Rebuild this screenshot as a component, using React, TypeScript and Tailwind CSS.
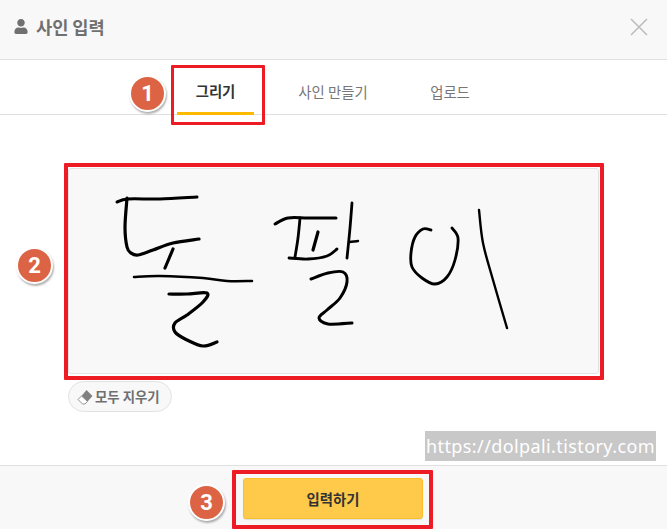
import React from "react";
import { FaUser } from "react-icons/fa";

type P = [number, number];

// Catmull-Rom through the sampled points of the handwriting
function smooth(p: P[]): string {
  let d = `M${p[0][0]} ${p[0][1]}`;
  for (let i = 0; i < p.length - 1; i++) {
    const a = p[Math.max(i - 1, 0)], b = p[i], c = p[i + 1], e = p[Math.min(i + 2, p.length - 1)];
    const c1x = b[0] + (c[0] - a[0]) / 6, c1y = b[1] + (c[1] - a[1]) / 6;
    const c2x = c[0] - (e[0] - b[0]) / 6, c2y = c[1] - (e[1] - b[1]) / 6;
    d += ` C${c1x.toFixed(1)} ${c1y.toFixed(1)} ${c2x.toFixed(1)} ${c2y.toFixed(1)} ${c[0]} ${c[1]}`;
  }
  return d;
}

const strokes: { w: number; p: P[] }[] = [
  { w: 3, p: [[117, 202], [128, 199], [160, 199], [197, 197]] },
  { w: 3.2, p: [[127, 198], [125, 227], [127, 247], [131, 253], [138, 255], [153, 250], [173, 243], [199, 239]] },
  { w: 3.2, p: [[173, 249], [165, 268]] },
  { w: 2.5, p: [[134, 277], [160, 276], [203, 278], [227, 281], [252, 281]] },
  { w: 3.2, p: [[169, 294], [187, 294], [207, 293], [203, 302], [187, 315], [175, 323], [175, 332], [187, 340], [203, 346], [217, 342]] },
  { w: 3, p: [[275, 224], [288, 218], [308, 218], [336, 218]] },
  { w: 2.8, p: [[300, 218], [298, 238], [295, 257]] },
  { w: 3.2, p: [[318, 232], [313, 250]] },
  { w: 2.8, p: [[289, 258], [308, 259], [327, 256], [337, 249]] },
  { w: 2.8, p: [[352, 203], [350, 228], [347, 258]] },
  { w: 2.5, p: [[350, 242], [358, 241]] },
  { w: 3, p: [[311, 279], [328, 273], [343, 272], [347, 282], [340, 298], [327, 310], [319, 318], [328, 324], [352, 323]] },
  { w: 2.8, p: [[431, 230], [423, 229], [415, 237], [411, 253], [412, 267], [422, 278], [435, 284], [447, 277], [455, 260], [458, 238], [452, 228]] },
  { w: 2.4, p: [[479, 210], [483, 243], [493, 280], [507, 328]] },
];

function Badge({ n, className }: { n: number; className: string }) {
  return (
    <div
      className={`absolute flex h-[37px] w-[37px] items-center justify-center rounded-full border-2 border-white bg-[#dc6445] text-[22px] font-bold text-white shadow-[1px_2px_2px_rgba(0,0,0,0.3)] ${className}`}
      style={{ fontFamily: "Roboto, sans-serif" }}
    >
      {n}
    </div>
  );
}

export default function App() {
  return (
    <div
      className="relative flex h-[529px] w-[667px] flex-col overflow-hidden bg-white"
      style={{ fontFamily: '"Noto Sans CJK KR", "Noto Sans", sans-serif' }}
    >
      {/* header */}
      <header className="flex h-[60px] items-center justify-between border-b border-[#e0e0e0] bg-[#f8f8f8] pb-[6px] pl-[14px] pr-[19px]">
        <div className="flex items-center gap-[8px] text-[#707070]">
          <FaUser className="h-[15px] w-[14px]" />
          <span className="text-[17.6px] font-bold leading-none">사인 입력</span>
        </div>
        <svg width="18" height="18" viewBox="0 0 18 18" className="text-[#bdbdbd]">
          <path d="M1 1 L17 17 M17 1 L1 17" stroke="currentColor" strokeWidth="1.6" fill="none" />
        </svg>
      </header>

      {/* tabs */}
      <nav className="flex h-[55px] gap-[24px] border-b border-[#e0e0e0] pl-[177px] text-[14.4px]">
        <div className="mb-[-1px] flex w-[77px] items-center justify-center border-b-[3px] border-[#ffb900] pt-[9px] font-bold text-[#333]">
          그리기
        </div>
        <div className="flex w-[110px] items-center justify-center pt-[10px] text-[#777]">사인 만들기</div>
        <div className="ml-[-2px] flex w-[80px] items-center justify-center pt-[10px] text-[#777]">업로드</div>
      </nav>

      {/* signature area */}
      <main className="flex flex-1 flex-col items-start px-[68px] pt-[53px]">
        <div className="relative h-[206px] w-[531px] rounded-[3px] border border-[#e3e3e3] bg-[#f8f8f8]">
          <svg
            className="absolute inset-0 h-full w-full"
            viewBox="69 169 529 204"
            fill="none"
            stroke="#000"
            strokeLinecap="round"
            strokeLinejoin="round"
          >
            {strokes.map((s, i) => (
              <path key={i} d={smooth(s.p)} strokeWidth={s.w} />
            ))}
          </svg>
        </div>
        <button className="mt-[7px] flex h-[31px] w-[104px] items-center gap-[2px] rounded-full border border-[#e2e2e2] bg-[#f8f8f8] pl-[8px] text-[13.4px] font-bold text-[#707070]">
          <svg width="16" height="16" viewBox="0 0 16 16">
            <path d="M9.5 1 L15.5 7 L10.5 12.5 L4.5 7 Z" fill="#808080" />
            <path d="M4.5 7 L10.5 12.5 L8 15 L5.5 15 L1 10.5 Z" fill="#fff" stroke="#909090" strokeWidth="1" />
          </svg>
          모두 지우기
        </button>
      </main>

      {/* footer */}
      <footer className="flex h-[64px] items-center justify-center border-t border-[#e0e0e0] bg-[#f8f8f8] pr-[1px] pt-[2px]">
        <button className="h-[41px] w-[180px] rounded-[3px] border border-[#fbbf2e] bg-[#ffc94a] text-[14.4px] font-bold text-[#333] shadow-[0_1px_1px_rgba(0,0,0,0.1)]">
          입력하기
        </button>
      </footer>

      {/* annotations over the dialog */}
      <div className="absolute left-[171px] top-[65px] h-[60px] w-[94px] rounded-[1px] border-[3px] border-[#ed1c24]" />
      <div className="absolute left-[64px] top-[163px] h-[217px] w-[540px] rounded-[1px] border-[4px] border-[#ed1c24]" />
      <div className="absolute left-[232px] top-[470px] h-[59px] w-[201px] rounded-[1px] border-[4px] border-[#ed1c24]" />
      <Badge n={1} className="left-[129px] top-[75px]" />
      <Badge n={2} className="left-[16px] top-[247px]" />
      <Badge n={3} className="left-[188px] top-[484px]" />
      <div
        className="absolute left-[425px] top-[431px] flex h-[30px] w-[231px] items-center justify-center bg-[#c8c8c8] text-[18px] tracking-[0.4px] text-white"
        style={{ fontFamily: '"Noto Sans", sans-serif' }}
      >
        https://dolpali.tistory.com
      </div>
    </div>
  );
}
